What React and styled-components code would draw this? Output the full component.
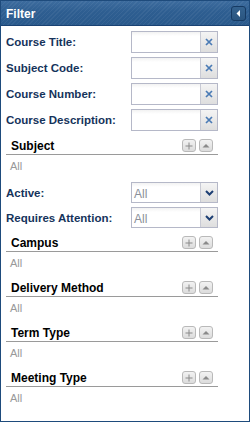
import React from "react";
import styled, { createGlobalStyle } from "styled-components";

const Global = createGlobalStyle`
  html, body { margin: 0; padding: 0; background: #fff; }
  body { font-family: "Liberation Sans", Arial, sans-serif; }
`;

const Panel = styled.div`
  box-sizing: border-box;
  width: 250px;
  height: 422px;
  border: 1px solid #1e4b7c;
  display: flex;
  flex-direction: column;
  background: #fff;
`;

const Header = styled.div`
  height: 24px;
  border-bottom: 1px solid #1a4273;
  background:
    repeating-linear-gradient(135deg, rgba(255,255,255,0.05) 0 1px, rgba(255,255,255,0) 1px 3px),
    linear-gradient(#3d6c9e, #2e5e91 45%, #2a5a8c);
  display: flex;
  align-items: center;
  justify-content: space-between;
  padding: 0 3px 0 5px;
`;

const Title = styled.span`
  color: #fff;
  font: bold 12px "Liberation Sans", Arial, sans-serif;
  padding-top: 1px;
`;

const CollapseBtn = styled.div`
  box-sizing: border-box;
  width: 15px;
  height: 15px;
  border: 1px solid #163a63;
  border-radius: 3px;
  background: linear-gradient(#34628f, #2a5580);
  display: flex;
  align-items: center;
  justify-content: center;
`;

const Body = styled.div`
  padding: 5px 31px 0 5px;
  display: flex;
  flex-direction: column;
`;

const FormGrid = styled.div`
  display: grid;
  grid-template-columns: 125px 87px;
  row-gap: ${(p) => p.$gap}px;
  align-items: center;
`;

const Label = styled.label`
  color: #15335b;
  font: bold 11.5px "Liberation Sans", Arial, sans-serif;
  white-space: nowrap;
`;

const Field = styled.div`
  box-sizing: border-box;
  height: ${(p) => p.$h}px;
  border: 1px solid #b5b8c8;
  display: flex;
  background: linear-gradient(#f2f2f2, #fff 4px);
`;

const FieldText = styled.div`
  flex: 1;
  color: #8a8f99;
  font: 12px "Liberation Sans", Arial, sans-serif;
  padding: 4px 0 0 2px;
`;

const Trigger = styled.div`
  box-sizing: border-box;
  width: 17px;
  border-left: 1px solid #c8cad4;
  background: linear-gradient(#f4f4f4, #dedede);
  display: flex;
  align-items: center;
  justify-content: center;
`;

const Gap = styled.div`
  height: ${(p) => p.$h}px;
`;

const SectionHead = styled.div`
  height: 17px;
  border-bottom: 1px solid #9a9a9a;
  display: flex;
  align-items: center;
  justify-content: space-between;
  padding: 0 5px 0 5px;
`;

const SectionTitle = styled.span`
  color: #000;
  font: bold 12px "Liberation Sans", Arial, sans-serif;
`;

const Tools = styled.div`
  display: flex;
  gap: 3px;
`;

const Tool = styled.div`
  box-sizing: border-box;
  width: 14px;
  height: 13px;
  border: 1px solid #b9b9b9;
  border-radius: 3px;
  background: linear-gradient(#f2f2f2, #dcdcdc);
  display: flex;
  align-items: center;
  justify-content: center;
`;

const AllRow = styled.div`
  box-sizing: border-box;
  height: 27px;
  padding: 4px 0 0 4px;
  color: #999;
  font: 11px/14px "Liberation Sans", Arial, sans-serif;
`;

const ClearIcon = () => (
  <svg width="8" height="8" viewBox="0 0 8 8">
    <path d="M1 1 L7 7 M7 1 L1 7" stroke="#4a7bb5" strokeWidth="1.7" />
  </svg>
);

const DownIcon = () => (
  <svg width="9" height="6" viewBox="0 0 9 6">
    <path d="M1 1 L4.5 4.5 L8 1" stroke="#1d3f74" strokeWidth="2" fill="none" />
  </svg>
);

const PlusIcon = () => (
  <svg width="8" height="8" viewBox="0 0 8 8">
    <path d="M4 0.5 V7.5 M0.5 4 H7.5" stroke="#8a8a8a" strokeWidth="1" />
  </svg>
);

const UpIcon = () => (
  <svg width="8" height="5" viewBox="0 0 8 5">
    <path d="M0.5 4.5 L4 1 L7.5 4.5 Z" fill="#8a8a8a" />
  </svg>
);

const LeftIcon = () => (
  <svg width="5" height="7" viewBox="0 0 5 7">
    <path d="M4 0 L0.5 3.5 L4 7 Z" fill="#fff" />
  </svg>
);

const textFields = ["Course Title:", "Subject Code:", "Course Number:", "Course Description:"];
const combos = ["Active:", "Requires Attention:"];

const Section = ({ title }) => (
  <>
    <SectionHead>
      <SectionTitle>{title}</SectionTitle>
      <Tools>
        <Tool><PlusIcon /></Tool>
        <Tool><UpIcon /></Tool>
      </Tools>
    </SectionHead>
    <AllRow>All</AllRow>
  </>
);

export default function App() {
  return (
    <>
      <Global />
      <Panel>
        <Header>
          <Title>Filter</Title>
          <CollapseBtn><LeftIcon /></CollapseBtn>
        </Header>
        <Body>
          <FormGrid $gap={4}>
            {textFields.map((l) => (
              <React.Fragment key={l}>
                <Label>{l}</Label>
                <Field $h={22}>
                  <FieldText />
                  <Trigger><ClearIcon /></Trigger>
                </Field>
              </React.Fragment>
            ))}
          </FormGrid>
          <Gap $h={6} />
          <Section title="Subject" />
          <FormGrid $gap={4}>
            {combos.map((l) => (
              <React.Fragment key={l}>
                <Label>{l}</Label>
                <Field $h={21}>
                  <FieldText>All</FieldText>
                  <Trigger><DownIcon /></Trigger>
                </Field>
              </React.Fragment>
            ))}
          </FormGrid>
          <Gap $h={6} />
          <Section title="Campus" />
          <Section title="Delivery Method" />
          <Section title="Term Type" />
          <Section title="Meeting Type" />
        </Body>
      </Panel>
    </>
  );
}
